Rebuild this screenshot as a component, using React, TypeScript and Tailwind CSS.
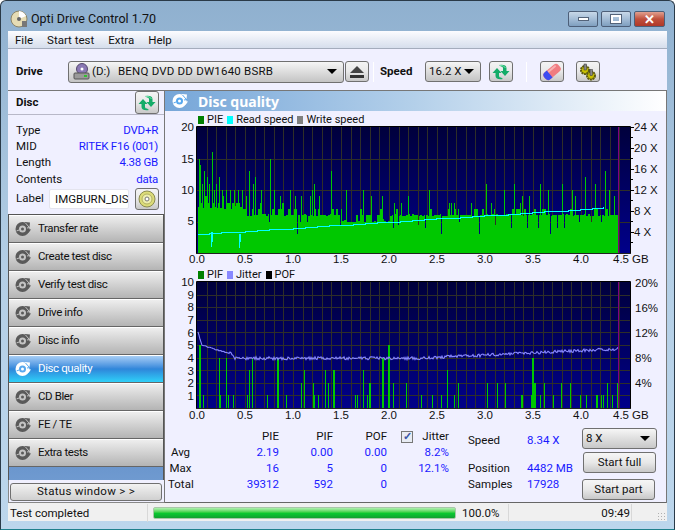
import React from 'react';

const FONT = "font-['Roboto','Noto_Sans',sans-serif]";
const CHART_FONT = "'Liberation Sans', sans-serif";

function makeRandom(seed: number) {
  let s = seed;
  return () => {
    s = (s * 16807) % 2147483647;
    return (s - 1) / 2147483646;
  };
}

// pixel x inside the chart svg (plot starts at x=32, 96px per GB)
const X0 = 32;
const gx = (gb: number) => X0 + gb * 96;

// PIE spikes read off the picture: [page x, value]
const PIE_SPIKES: [number, number][] = [
  [198, 15], [199, 14], [201, 11], [203, 13], [205, 9], [206, 12], [208, 11], [211, 16], [213, 10], [215, 11], [218, 12],
  [221, 10], [225, 10], [229, 10], [233, 10], [237, 10], [241, 10], [245, 9], [248, 13], [252, 11], [254, 12], [260, 10],
  [269, 15], [273, 10], [279, 9], [289, 10], [294, 9], [299, 9], [300, 9], [309, 9], [311, 10], [313, 11], [318, 9],
  [330, 13], [345, 10], [362, 10], [370, 9], [381, 9], [393, 8], [400, 8], [407, 9], [428, 10], [448, 8], [450, 8],
  [453, 8], [470, 8], [485, 11], [490, 8], [503, 10], [513, 11], [519, 8], [528, 9], [539, 11], [547, 10], [561, 11],
  [571, 10], [584, 12], [594, 11], [604, 13], [608, 10], [613, 9], [574, 9], [556, 9], [521, 9],
];
const PIE_DIPS: [number, number][] = [
  [268, 5], [296, 3], [299, 5], [306, 5], [339, 4.5], [375, 5], [392, 4], [397, 4.5], [417, 4.5], [424, 4], [440, 3],
  [458, 5], [478, 3], [494, 4.5], [510, 4], [526, 4], [537, 4], [549, 3], [556, 4], [563, 4], [578, 5], [590, 5], [600, 5],
];

function pieBars() {
  const r = makeRandom(4711);
  const out: number[] = [];
  for (let px = 197; px < 618; px += 1) {
    const gb = (px - 197) / 96;
    const top = gb < 0.5 ? 9.5 - gb * 3 : gb < 2 ? 8.2 - (gb - 0.5) * 1.1 : 7;
    const floor = gb < 0.5 ? 7 : gb < 1.5 ? 5.8 : gb < 2 ? 5 : 5.8;
    const v = r() < 0.45 ? floor + r() * 0.4 : Math.round(floor + r() * (top - floor));
    out.push(v);
  }
  // sample width is about two pixels
  for (let i = 1; i < out.length; i += 2) out[i] = out[i - 1];
  PIE_SPIKES.forEach(([px, v]) => { out[px - 197] = v; });
  PIE_DIPS.forEach(([px, v]) => { out[px - 197] = v; });
  return out;
}

const PIF_LEFT: [number, number, number][] = [
  [100, 5, 2], [103, 1, 1], [112, 1, 1], [160, 4, 1], [163, 1, 1], [181, 4, 1], [187, 1, 1], [202, 1, 1], [244, 1, 1],
  [250, 3, 1], [257, 1, 1], [259, 4, 1], [304, 1, 1], [332, 4, 2], [361, 1, 1], [404, 2, 1], [415, 3, 1], [442, 2, 1],
  [445, 1, 1], [457, 1, 1], [478, 3, 1], [487, 2, 1], [500, 3, 2], [568, 1, 1], [574, 1, 1], [590, 1, 1], [592, 3, 1],
  [604, 1, 1], [608, 2, 2], [648, 4, 2], [666, 5, 2], [682, 2, 1], [721, 2, 1],
];
const PIF_RIGHT: [number, number, number][] = [
  [16, 1, 1], [49, 1, 1], [76, 1, 1], [94, 3, 1], [115, 1, 1], [127, 2, 1], [214, 2, 1], [244, 2, 1], [268, 2, 1],
  [315, 1, 2], [344, 1, 1], [348, 4, 2], [354, 2, 2], [373, 1, 1], [385, 2, 1], [412, 1, 1], [436, 2, 1], [463, 2, 1],
  [493, 1, 1], [511, 1, 1], [541, 1, 2], [556, 1, 1], [562, 1, 1], [574, 2, 1], [589, 1, 1], [604, 2, 1],
];

function Grid({ id, top, h, rows }: { id: string; top: number; h: number; rows: number }) {
  const lines = [];
  for (let i = 1; i < 45; i += 1) {
    const x = Math.round(gx(i / 10)) + 0.5;
    lines.push(<line key={i} x1={x} x2={x} y1={top} y2={top + h} stroke="#2e2e28" />);
  }
  for (let i = 1; i < rows; i += 1) {
    const y = Math.round(top + (h * i) / rows) + 0.5;
    lines.push(<line key={`r${i}`} x1={X0} x2={X0 + 433} y1={y} y2={y} stroke="#2e2e28" />);
  }
  return (
    <>
      <defs>
        <linearGradient id={id} x1="0" y1="0" x2="0" y2="1">
          <stop offset="0" stopColor="#00003c" />
          <stop offset="1" stopColor="#00008a" />
        </linearGradient>
      </defs>
      <rect x={X0} y={top} width={433} height={h} fill={`url(#${id})`} />
      {lines}
    </>
  );
}

function Frame({ top, h }: { top: number; h: number }) {
  return (
    <>
      <line x1={453.5} x2={453.5} y1={top} y2={top + h} stroke="#800080" />
      <path d={`M${X0 - 0.5} ${top + h} V${top - 0.5} H${X0 + 433.5} V${top + h}`} fill="none" stroke="#000" />
      <line x1={X0 - 1} x2={X0 + 434} y1={top + h + 0.5} y2={top + h + 0.5} stroke="#222" />
    </>
  );
}

function XLabels({ y }: { y: number }) {
  const labels = ['0.0', '0.5', '1.0', '1.5', '2.0', '2.5', '3.0', '3.5', '4.0'];
  return (
    <>
      {labels.map((l, i) => (
        <text key={l} x={gx(i / 2)} y={y} textAnchor="middle">{l}</text>
      ))}
      <text x={448} y={y}>4.5</text>
      <text x={467} y={y}>GB</text>
    </>
  );
}

function PieChart() {
  const bars = pieBars();
  const pts: string[] = [];
  // stepped read speed line
  for (let px = 197; px <= 603; px += 1) {
    const t = (px - 197) / 406;
    const y = Math.round(234 - Math.floor(t * 34) * 0.78);
    pts.push(`${px - 164},${y - 126 + 0.5}`);
  }
  return (
    <svg width={503} height={142} className="block overflow-visible" fontSize={11.5} fontFamily={CHART_FONT} fill="#111">
      <Grid id="pie" top={1} h={126} rows={4} />
      <g shapeRendering="crispEdges">
        {bars.map((v, i) => (
          <rect key={i} x={X0 + 1 + i} y={127 - v * 6.3} width={1} height={v * 6.3} fill="#00c800" />
        ))}
        <polyline points={pts.join(' ')} fill="none" stroke="#00ffff" strokeWidth={1.4} />
      </g>
      <path d="M46.5 106 V121 M47.5 106 V116 M74.5 108 V122 M75.5 108 V116" stroke="#00ffff" />
      <Frame top={1} h={126} />
      {[['20', 5], ['15', 37], ['10', 68], ['5', 99]].map(([l, y]) => (
        <text key={l} x={29} y={Number(y)} textAnchor="end">{l}</text>
      ))}
      {[['24 X', 5], ['20 X', 26], ['16 X', 47], ['12 X', 68], ['8 X', 89], ['4 X', 110]].map(([l, y]) => (
        <text key={l} x={469} y={Number(y)}>{l}</text>
      ))}
      {[1, 11, 22, 32, 43, 53, 64, 74, 85, 95, 106, 116].map((y) => (
        <line key={y} x1={466} x2={y % 21 === 1 ? 469 : 468} y1={y + 0.5} y2={y + 0.5} stroke="#000" />
      ))}
      <XLabels y={137} />
    </svg>
  );
}

function PifChart() {
  const r = makeRandom(99);
  const pts: string[] = [];
  for (let px = 197; px <= 617; px += 1) {
    const gb = (px - 197) / 96;
    let v: number;
    if (gb < 0.04) v = 6 - gb * 25;
    else if (gb < 0.33) v = 5 - (gb - 0.04) * 2.4;
    else if (gb < 0.38) v = 4.6 - (gb - 0.33) * 12;
    else if (gb < 2.3) v = 3.95;
    else v = 3.95 + (gb - 2.3) * 0.36;
    const n = gb < 0.33 ? 0.08 : 0.24;
    pts.push(`${px - 164},${(127 - v * 12.6 + (r() - 0.5) * n * 12.6).toFixed(1)}`);
  }
  return (
    <svg width={503} height={143} className="block overflow-visible" fontSize={11.5} fontFamily={CHART_FONT} fill="#111">
      <Grid id="pif" top={1} h={126} rows={10} />
      <g shapeRendering="crispEdges">
        {PIF_LEFT.map(([z, v, w]) => (
          <rect key={`l${z}`} x={1 + Math.round(z / 3)} y={127 - v * 12.6} width={w} height={v * 12.6} fill="#00c800" />
        ))}
        {PIF_RIGHT.map(([z, v, w]) => (
          <rect key={`r${z}`} x={251 + Math.round(z / 3)} y={127 - v * 12.6} width={w} height={v * 12.6} fill="#00c800" />
        ))}
      </g>
      <polyline points={pts.join(' ')} fill="none" stroke="#8888ff" strokeWidth={1.1} />
      <Frame top={1} h={126} />
      {['10', '9', '8', '7', '6', '5', '4', '3', '2', '1'].map((l, i) => (
        <text key={l} x={29} y={5 + i * 12.65} textAnchor="end">{l}</text>
      ))}
      {[['20%', 6], ['16%', 31], ['12%', 56], ['8%', 81], ['4%', 106]].map(([l, y]) => (
        <text key={l} x={470} y={Number(y)}>{l}</text>
      ))}
      <XLabels y={138} />
    </svg>
  );
}

function DiscGlyph({ active }: { active?: boolean }) {
  const c = active ? '#ffffff' : '#5a5a5a';
  const h = active ? '#58a8ee' : '#c4c4c4';
  return (
    <svg width={16} height={16} viewBox="0 0 16 16" className="shrink-0">
      <circle cx={7.5} cy={8} r={7} fill={c} />
      <circle cx={7.5} cy={8} r={3.5} fill={h} />
      <circle cx={7.5} cy={8} r={1.5} fill={c} />
      <path d="M10 1 L15 1.5 L14.5 6 L11 5 Z M12 8 L16 8.5 L13.5 12 Z" fill={c} />
      <path d="M10.5 2 L14 6 M1.5 10 L4 9 M12 7 L15 6.5" stroke={h} strokeWidth={1} />
    </svg>
  );
}

function Arrows() {
  return (
    <svg width={18} height={18} viewBox="0 0 18 18">
      <path d="M5 5 L9.5 10 H7 V13 Q7 14.5 9 14.5 L11 16 Q4 17 3.5 13 V10 H0.5 Z" fill="#14ac68" />
      <path d="M13 13 L8.5 8 H11 V5 Q11 3.5 9 3.5 L7 2 Q14 1 14.5 5 V8 H17.5 Z" fill="#14ac68" />
      <path d="M8 2.5 Q12 2 13.5 5" stroke="#7fe6b0" fill="none" />
    </svg>
  );
}

function ToolButton({ children, className = '' }: { children: React.ReactNode; className?: string }) {
  return (
    <div className={`w-[24px] h-[21px] shrink-0 flex items-center justify-center rounded-[3px] border border-[#707070] bg-gradient-to-b from-[#f4f4f4] via-[#e8e8e8] to-[#c8c8c8] ${className}`}>
      {children}
    </div>
  );
}

function Caret() {
  return <div className="w-0 h-0 border-l-[5px] border-r-[5px] border-t-[5px] border-l-transparent border-r-transparent border-t-black" />;
}

function Legend({ items, className }: { items: [string, string][]; className: string }) {
  return (
    <div className={`${className} shrink-0 pl-[33px] flex items-center text-[11px] text-[#111]`}>
      {items.map(([color, label]) => (
        <React.Fragment key={label}>
          <span className="w-[6px] h-[8px] mr-[3px]" style={{ background: color }} />
          <span className="mr-[4px]">{label}</span>
        </React.Fragment>
      ))}
    </div>
  );
}

function InfoRow({ label, value }: { label: string; value: string }) {
  return (
    <div className="h-[16.4px] flex items-center justify-between">
      <span>{label}</span>
      <span className="text-[#1a1aff] tracking-[-0.25px]">{value}</span>
    </div>
  );
}

const NAV = ['Transfer rate', 'Create test disc', 'Verify test disc', 'Drive info', 'Disc info', 'Disc quality', 'CD Bler', 'FE / TE', 'Extra tests'];

function Sidebar() {
  return (
    <div className="w-[156px] shrink-0 flex flex-col">
      <div className="h-[24px] pl-[8px] pr-[5px] flex items-center justify-between font-bold text-[11.5px] text-[#111] border-b border-[#b8b8c8]">
        <span>Disc</span>
        <ToolButton className="h-[23px]"><Arrows /></ToolButton>
      </div>
      <div className="pl-[8px] pr-[6px] pt-[7px] text-[11.5px] text-[#111]">
        <InfoRow label="Type" value="DVD+R" />
        <InfoRow label="MID" value="RITEK F16 (001)" />
        <InfoRow label="Length" value="4.38 GB" />
        <InfoRow label="Contents" value="data" />
        <div className="flex items-center">
          <span className="w-[33px]">Label</span>
          <span className="w-[80px] h-[20px] px-[5px] bg-white border border-[#e4e4ee] rounded-[2px] overflow-hidden whitespace-nowrap leading-[18px]">IMGBURN_DIS</span>
          <ToolButton className="ml-[6px] h-[22px] mr-[-1px]">
            <svg width={18} height={18} viewBox="0 0 18 18">
              <circle cx={9} cy={9} r={8} fill="#dcdc78" stroke="#8a8a50" />
              <circle cx={9} cy={9} r={5} fill="#eeeeb0" stroke="#b0b060" />
              <circle cx={9} cy={9} r={2} fill="#fff" stroke="#777" />
            </svg>
          </ToolButton>
        </div>
      </div>
      <div className="mt-[4px] flex-1 flex flex-col border border-[#555] border-b-0 bg-gradient-to-b from-[#1f4f9c] to-[#6f9ad0]">
        {NAV.map((n) => {
          const active = n === 'Disc quality';
          return (
            <div
              key={n}
              className={`h-[28px] shrink-0 pl-[6px] flex items-center gap-[7px] text-[11.5px] tracking-[-0.4px] border-t border-b border-t-white border-b-[#666] ${
                active
                  ? 'bg-gradient-to-b from-[#a6cdf5] via-[#2f86da] to-[#2fd0f8] text-white border-t-[#cfe4fa]'
                  : 'bg-gradient-to-b from-[#eeeeee] to-[#b4b4b4] text-[#111]'
              }`}
            >
              <DiscGlyph active={active} />
              <span className="pt-[1px]">{n}</span>
            </div>
          );
        })}
        <div className="flex-1" />
      </div>
      <div className="h-[23px] pt-[3px] pl-[1px] pr-[2px] border-l border-b border-[#888]">
        <div className="h-[18px] flex items-center justify-center rounded-[3px] border border-[#707070] bg-gradient-to-b from-[#f2f2f2] to-[#d0d0d0] text-[11.5px] tracking-[0.3px] text-[#111]">
          Status window &gt; &gt;
        </div>
      </div>
    </div>
  );
}

function StatsTable() {
  const rows = [
    ['Avg', '2.19', '0.00', '0.00', '8.2%'],
    ['Max', '16', '5', '0', '12.1%'],
    ['Total', '39312', '592', '0', ''],
  ];
  return (
    <div className="w-[284px] shrink-0 text-[11.5px] text-[#111]">
      <div className="h-[16px] grid grid-cols-[25px_86px_54px_54px_62px] items-center text-right">
        <span />
        <span>PIE</span>
        <span>PIF</span>
        <span>POF</span>
        <span className="flex items-center justify-end gap-[9px]">
          <span className="w-[12px] h-[12px] border border-[#777] bg-[#e8ecf4] flex items-center justify-center text-[#3a55a8] text-[11px] font-bold leading-none">✓</span>
          Jitter
        </span>
      </div>
      {rows.map((row) => (
        <div key={row[0]} className="h-[16px] grid grid-cols-[25px_86px_54px_54px_62px] items-center text-right text-[#1a1aff]">
          <span className="text-center text-[#111]">{row[0]}</span>
          <span>{row[1]}</span>
          <span>{row[2]}</span>
          <span>{row[3]}</span>
          <span>{row[4]}</span>
        </div>
      ))}
    </div>
  );
}

function SpeedBlock() {
  return (
    <div className="w-[130px] shrink-0 text-[11.5px] text-[#111] pl-[16px]">
      <div className="h-[16px] mt-[4px] grid grid-cols-[59px_1fr] items-center">
        <span>Speed</span>
        <span className="text-[#1a1aff]">8.34 X</span>
      </div>
      <div className="h-[16px] mt-[12px] grid grid-cols-[59px_1fr] items-center">
        <span>Position</span>
        <span className="text-[#1a1aff]">4482 MB</span>
      </div>
      <div className="h-[16px] grid grid-cols-[59px_1fr] items-center">
        <span>Samples</span>
        <span className="text-[#1a1aff]">17928</span>
      </div>
    </div>
  );
}

function Controls() {
  const btn = 'flex items-center justify-center rounded-[3px] border border-[#707070] bg-gradient-to-b from-[#f6f6f6] via-[#e8e8e8] to-[#c8c8c8] h-[21px]';
  return (
    <div className="w-[75px] shrink-0 text-[11.5px] text-[#111] flex flex-col">
      <div className="h-[21px] pl-[3px] pr-[6px] flex items-center justify-between rounded-[3px] border border-[#707070] bg-gradient-to-b from-[#f6f6f6] to-[#c8c8c8]">
        <span>8 X</span>
        <Caret />
      </div>
      <div className={`${btn} mt-[3px] mx-[1px]`}>Start full</div>
      <div className={`${btn} mt-[6px] mr-[2px]`}>Start part</div>
    </div>
  );
}

function WinButton({ w, className, children }: { w: string; className: string; children: React.ReactNode }) {
  return (
    <div className={`${w} h-[16px] flex items-center justify-center rounded-[2px] border border-[#4d5f78] ${className}`}>
      {children}
    </div>
  );
}

export default function App() {
  return (
    <div className={`${FONT} w-[675px] h-[530px] overflow-hidden relative rounded-t-[6px] border border-[#2a3a48] border-b-[#20808c] bg-gradient-to-b from-[#8fb0cf] via-[#b4cfe6] to-[#bcd6ec] flex flex-col`}>
      {/* Title bar */}
      <div className="h-[30px] shrink-0 pl-[9px] pr-[9px] flex">
        <svg width={18} height={18} viewBox="0 0 18 18" className="mt-[9px]">
          <circle cx={9} cy={9} r={8} fill="#e6dcb4" stroke="#8a8468" />
          <path d="M9 9 L9 1 A8 8 0 0 1 16 6 Z" fill="#fff" />
          <circle cx={9} cy={9} r={2} fill="#666" />
          <rect x={12} y={11} width={5} height={6} fill="#777" />
        </svg>
        <span className="text-[12.5px] text-[#111] ml-[3px] mt-[10px] leading-[16px]">Opti Drive Control 1.70</span>
        <div className="ml-auto flex gap-[3px] mt-[10px] self-start">
          <WinButton w="w-[30px]" className="bg-gradient-to-b from-[#c8d8e8] via-[#a4bdd6] to-[#7f9fbf]">
            <span className="w-[11px] h-[4px] bg-white border border-[#54647a]" />
          </WinButton>
          <WinButton w="w-[30px]" className="bg-gradient-to-b from-[#c8d8e8] via-[#a4bdd6] to-[#7f9fbf]">
            <span className="w-[10px] h-[8px] border-2 border-white outline outline-1 outline-[#54647a]" />
          </WinButton>
          <WinButton w="w-[31px]" className="bg-gradient-to-b from-[#e0a090] via-[#c0503c] to-[#b03828]">
            <span className="text-white font-bold text-[13px] leading-none">✕</span>
          </WinButton>
        </div>
      </div>

      {/* Client area */}
      <div className="mx-[7px] flex-1 min-h-0 flex flex-col bg-[#f0f0ff]">
        <div className="h-[18px] shrink-0 pl-[7px] pt-[2px] flex items-center gap-[14px] text-[11.5px] text-[#111] bg-gradient-to-b from-[#fcfcff] to-[#d6deec] border-b border-[#a4acbc]">
          <span>File</span>
          <span>Start test</span>
          <span>Extra</span>
          <span>Help</span>
        </div>

        <div className="h-[42px] shrink-0 pl-[8px] pt-[4px] flex items-center text-[11.5px] text-[#111] border-b border-[#777]">
          <span className="w-[52px] font-bold">Drive</span>
          <div className="w-[276px] h-[22px] pl-[4px] pr-[6px] flex items-center rounded-[3px] border border-[#707070] bg-gradient-to-b from-[#f6f6f6] to-[#c4c4c4]">
            <svg width={17} height={17} viewBox="0 0 17 17" className="mr-[2px]">
              <circle cx={9} cy={6} r={5.5} fill="#8a78b4" stroke="#55486e" />
              <circle cx={9} cy={6} r={1.5} fill="#fff" />
              <rect x={1} y={10} width={15} height={6} rx={1} fill="#9a9a9a" stroke="#555" />
              <rect x={11} y={12} width={3} height={2} fill="#30c030" />
            </svg>
            <span className="w-[26px]">(D:)</span>
            <span className="tracking-[0.2px]">BENQ DVD DD DW1640 BSRB</span>
            <span className="ml-auto"><Caret /></span>
          </div>
          <ToolButton className="ml-[1px]">
            <svg width={16} height={14} viewBox="0 0 16 14">
              <path d="M8 1 L15 8 H1 Z" fill="#444" />
              <rect x={1} y={10} width={14} height={3} fill="#333" />
            </svg>
          </ToolButton>
          <span className="w-px h-[20px] ml-[4px] bg-white" />
          <span className="w-[45px] ml-[6px] font-bold">Speed</span>
          <div className="w-[56px] h-[21px] pl-[3px] pr-[6px] flex items-center justify-between rounded-[3px] border border-[#707070] bg-gradient-to-b from-[#f6f6f6] to-[#c4c4c4]">
            <span>16.2 X</span>
            <Caret />
          </div>
          <ToolButton className="ml-[8px]"><Arrows /></ToolButton>
          <span className="w-px h-[20px] ml-[13px] bg-white" />
          <ToolButton className="ml-[13px]">
            <svg width={20} height={18} viewBox="0 0 20 18">
              <g transform="rotate(-40 10 9)">
                <rect x={0.5} y={4.5} width={19} height={9} rx={3.5} fill="#f07c80" />
                <rect x={3} y={5.5} width={14} height={2} rx={1} fill="#f8b0b0" />
                <path d="M4 4.5 H7 V13.5 H4 Q0.5 13.5 0.5 9 Q0.5 4.5 4 4.5 Z" fill="#3c4cf0" />
              </g>
            </svg>
          </ToolButton>
          <ToolButton className="ml-[12px]">
            <svg width={20} height={18} viewBox="0 0 20 18">
              <circle cx={7} cy={7} r={4} fill="#c8c000" stroke="#5c5a10" strokeWidth={2} strokeDasharray="2 0.6" />
              <circle cx={13} cy={12.5} r={4} fill="#c8c000" stroke="#5c5a10" strokeWidth={2} strokeDasharray="2 0.6" />
              <rect x={6} y={1} width={2.5} height={6} fill="#888" stroke="#333" strokeWidth={0.5} />
              <rect x={12} y={6.5} width={2.5} height={6} fill="#888" stroke="#333" strokeWidth={0.5} />
            </svg>
          </ToolButton>
        </div>

        <div className="flex-1 min-h-0 flex">
          <Sidebar />
          <div className="flex-1 min-w-0 flex flex-col border-l border-r border-[#777]">
            <div className="h-[20px] shrink-0 pl-[7px] flex items-center gap-[10px] bg-gradient-to-r from-[#76a6d8] via-[#b4d0ea] to-[#ffffff] text-white font-bold text-[14px] font-['Noto_Sans',sans-serif]">
              <DiscGlyph active />
              <span>Disc quality</span>
            </div>
            <Legend className="h-[15px] pt-[3px]" items={[['#008000', 'PIE'], ['#00ffff', 'Read speed'], ['#808080', 'Write speed']]} />
            <PieChart />
            <Legend className="h-[13px] pt-[1px]" items={[['#008000', 'PIF'], ['#8888ff', 'Jitter'], ['#000000', 'POF']]} />
            <div className="h-[143px] shrink-0">
              <PifChart />
            </div>
            <div className="flex-1 min-h-0 flex pl-[3px] pt-[4px] border-b border-[#666]">
              <StatsTable />
              <SpeedBlock />
              <Controls />
            </div>
          </div>
        </div>

        {/* Status bar */}
        <div className="h-[18px] shrink-0 pt-[2px] flex items-center text-[11.5px] text-[#111] bg-[#f0f0f0]">
          <span className="w-[140px] pl-[2px] pt-[1px] border-r border-[#d8d8d8]">Test completed</span>
          <div className="w-[303px] h-[12px] ml-[5px] rounded-[2px] border border-[#a8c8a8] bg-gradient-to-b from-[#b0f0b0] via-[#08cc30] to-[#10a030]" />
          <span className="w-[53px] pl-[6px] pt-[1px] border-r border-[#d8d8d8]">100.0%</span>
          <span className="w-[123px] pr-[1px] pt-[1px] text-right border-r border-[#d8d8d8]">09:49</span>
          <span className="ml-auto mr-[1px] mt-[6px] w-[9px] h-[9px] bg-[radial-gradient(#b0b0b0_1px,transparent_1px)] bg-[length:3px_3px]" />
        </div>
      </div>
      <div className="h-[8px] shrink-0" />
    </div>
  );
}
